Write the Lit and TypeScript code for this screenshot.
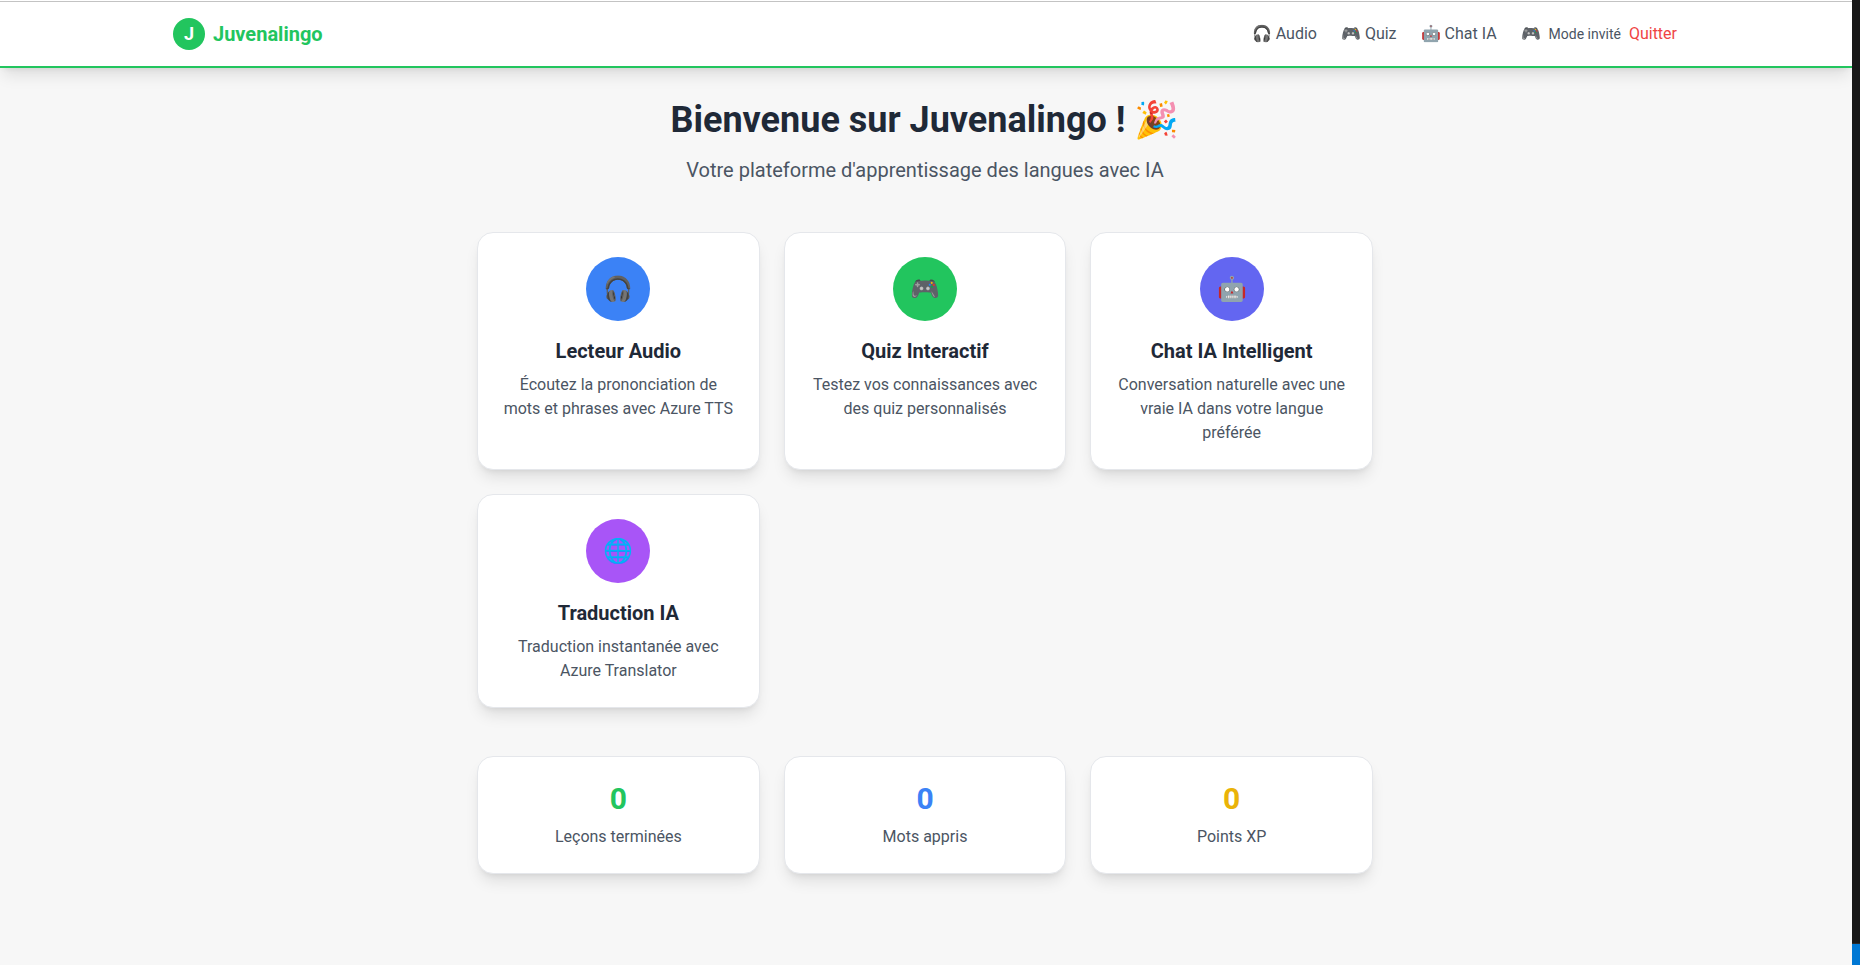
import { LitElement, html, css } from "lit";
import { customElement } from "lit/decorators.js";

const features = [
  { icon: "🎧", tone: "blue", title: "Lecteur Audio", text: "Écoutez la prononciation de mots et phrases avec Azure TTS" },
  { icon: "🎮", tone: "green", title: "Quiz Interactif", text: "Testez vos connaissances avec des quiz personnalisés" },
  { icon: "🤖", tone: "indigo", title: "Chat IA Intelligent", text: "Conversation naturelle avec une vraie IA dans votre langue préférée" },
  { icon: "🌐", tone: "purple", title: "Traduction IA", text: "Traduction instantanée avec Azure Translator" },
];

const stats = [
  { value: 0, tone: "green", label: "Leçons terminées" },
  { value: 0, tone: "blue", label: "Mots appris" },
  { value: 0, tone: "yellow", label: "Points XP" },
];

@customElement("app-root")
export class AppRoot extends LitElement {
  static styles = css`
    :host {
      display: flex;
      min-height: 100vh;
      font-family: Roboto, "Noto Sans", sans-serif;
      font-size: 16px;
      line-height: 24px;
      color: #4b5563;
      background: #f7f7f7;
    }
    * { box-sizing: border-box; }
    h1, h2, p { margin: 0; }
    a { color: inherit; text-decoration: none; }
    .page { flex: 1; min-width: 0; }
    .topline { height: 2px; background: #fff; border-bottom: 1px solid #c4c4c4; }
    .edge { width: 8px; background: linear-gradient(to top, #0078d4 21px, #2b2b2b 21px 22px, #181818 22px); }
    header, .content { padding-right: 2px; }
    header {
      background: #fff;
      border-bottom: 2px solid #22c55e;
      box-shadow: 0 10px 15px -3px rgba(0, 0, 0, 0.1), 0 4px 6px -4px rgba(0, 0, 0, 0.1);
    }
    .bar {
      max-width: 1536px;
      margin: 0 auto;
      padding: 16px;
      display: flex;
      align-items: center;
      justify-content: space-between;
    }
    .brand { display: flex; align-items: center; gap: 8px; font-size: 20px; line-height: 28px; font-weight: 700; color: #22c55e; }
    .badge {
      width: 32px; height: 32px; border-radius: 50%;
      background: #22c55e; color: #fff; font-size: 18px;
      display: flex; align-items: center; justify-content: center;
    }
    nav { display: flex; align-items: center; gap: 24px; }
    .guest { display: flex; align-items: center; gap: 8px; }
    .mode { font-size: 14px; line-height: 20px; }
    .quit { border: 0; padding: 0; background: none; font: inherit; color: #ef4444; cursor: pointer; }
    main { max-width: 928px; margin: 0 auto; padding: 32px 16px; }
    .intro { text-align: center; margin-bottom: 48px; }
    h1 { font-size: 36px; line-height: 40px; font-weight: 700; color: #1f2937; margin-bottom: 16px; }
    .lead { font-size: 20px; line-height: 28px; }
    .grid { display: grid; grid-template-columns: repeat(3, 1fr); gap: 24px; }
    .features { margin-bottom: 48px; }
    .card {
      background: #fff;
      border: 1px solid #e5e7eb;
      border-radius: 16px;
      padding: 24px;
      text-align: center;
      box-shadow: 0 10px 15px -3px rgba(0, 0, 0, 0.1), 0 4px 6px -4px rgba(0, 0, 0, 0.1);
    }
    .icon {
      width: 64px; height: 64px; border-radius: 50%;
      margin: 0 auto 16px;
      display: flex; align-items: center; justify-content: center;
      font-size: 24px; line-height: 32px;
    }
    .icon.blue { background: #3b82f6; }
    .icon.green { background: #22c55e; }
    .icon.indigo { background: #6366f1; }
    .icon.purple { background: #a855f7; }
    h2 { font-size: 20px; line-height: 28px; font-weight: 700; color: #1f2937; margin-bottom: 8px; }
    .value { font-size: 30px; line-height: 36px; font-weight: 700; margin-bottom: 8px; }
    .value.green { color: #22c55e; }
    .value.blue { color: #3b82f6; }
    .value.yellow { color: #eab308; }
  `;

  render() {
    return html`
      <div class="page">
        <div class="topline"></div>
        <header>
          <div class="bar">
            <a class="brand" href="#"><span class="badge">J</span><span>Juvenalingo</span></a>
            <nav>
              <a href="#audio">🎧 Audio</a>
              <a href="#quiz">🎮 Quiz</a>
              <a href="#chat">🤖 Chat IA</a>
              <div class="guest">
                <span>🎮</span><span class="mode">Mode invité</span>
                <button class="quit" type="button">Quitter</button>
              </div>
            </nav>
          </div>
        </header>
        <div class="content">
          <main>
            <div class="intro">
              <h1>Bienvenue sur Juvenalingo ! 🎉</h1>
              <p class="lead">Votre plateforme d'apprentissage des langues avec IA</p>
            </div>
            <div class="grid features">
              ${features.map((f) => html`
                <a class="card" href="#">
                  <div class="icon ${f.tone}">${f.icon}</div>
                  <h2>${f.title}</h2>
                  <p>${f.text}</p>
                </a>`)}
            </div>
            <div class="grid">
              ${stats.map((s) => html`
                <div class="card">
                  <div class="value ${s.tone}">${s.value}</div>
                  <p>${s.label}</p>
                </div>`)}
            </div>
          </main>
        </div>
      </div>
      <div class="edge"></div>
    `;
  }
}
